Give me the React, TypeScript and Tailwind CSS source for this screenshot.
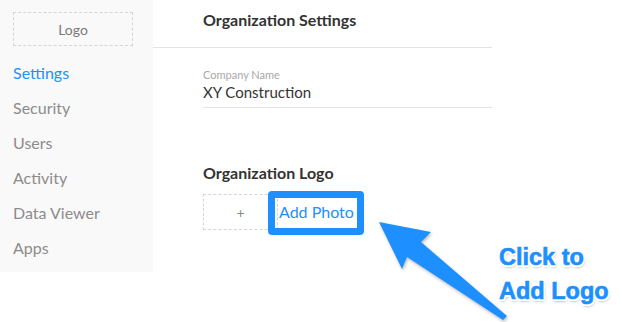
const navItems = ["Settings", "Security", "Users", "Activity", "Data Viewer", "Apps"];

function Sidebar() {
  return (
    <aside className="w-[153px] h-[272px] shrink-0 bg-[#f9f9f9] px-[13px] pt-[12px]">
      <div className="flex h-[34px] w-[120px] items-center justify-center border border-dashed border-[#d5d5d5] text-[14px] text-[#7a7a7a]">
        Logo
      </div>
      <nav className="mt-[9px] flex flex-col">
        {navItems.map((item, index) => (
          <a
            key={item}
            className={`h-[35px] text-[16px] leading-[35px] ${index === 0 ? "text-[#1e8fff]" : "text-[#8c8c8c]"}`}
          >
            {item}
          </a>
        ))}
      </nav>
    </aside>
  );
}

function ArrowNote() {
  return (
    <>
      <svg
        className="absolute left-0 top-0 pointer-events-none [filter:drop-shadow(1px_2px_1.5px_rgba(0,0,0,0.25))]"
        width="622"
        height="322"
        viewBox="0 0 622 322"
      >
        <path d="M379 222 L431 232 L421 242 L507 316 L503 320 L407 257 L402 269 Z" fill="#1e8fff" />
      </svg>
      <div className="absolute left-[499px] top-[240px] text-[23.5px] font-bold leading-[34px] text-[#1e8fff] [-webkit-text-stroke:0.6px_#1e8fff] [font-family:'Liberation_Sans',Arial,sans-serif] [text-shadow:2px_0_0_#fff,-2px_0_0_#fff,0_2px_0_#fff,0_-2px_0_#fff,1.5px_1.5px_0_#fff,-1.5px_-1.5px_0_#fff,1.5px_-1.5px_0_#fff,-1.5px_1.5px_0_#fff,1px_2px_3px_rgba(0,0,0,0.45)]">
        <div>Click to</div>
        <div>Add Logo</div>
      </div>
    </>
  );
}

export default function App() {
  return (
    <div className="relative h-[322px] w-[622px] overflow-hidden bg-white [font-family:Lato,'Open_Sans',sans-serif]">
      <div className="flex">
        <Sidebar />
        <main className="w-[339px]">
          <div className="h-[48px] border-b border-[#e3e3e3] pl-[50px] pt-[10px]">
            <h1 className="text-[16px] font-bold leading-[20px] text-[#333]">Organization Settings</h1>
          </div>
          <div className="pl-[50px]">
            <div className="border-b border-[#e3e3e3] pt-[20px] pb-[5px]">
              <label className="block text-[11px] leading-[14px] text-[#a8a8a8]">Company Name</label>
              <div className="text-[15px] leading-[20px] text-[#333]">XY Construction</div>
            </div>
            <h2 className="mt-[55px] text-[16px] font-bold leading-[20px] text-[#333]">Organization Logo</h2>
            <div className="relative mt-[11px] flex items-center">
              <div className="flex h-[36px] w-[75px] items-center justify-center border border-dashed border-[#d5d5d5] text-[14px] text-[#888]">
                +
              </div>
              <a className="ml-[1px] text-[16px] leading-[20px] text-[#1e8fff]">Add Photo</a>
              <div className="absolute left-[65px] top-[-3px] h-[44px] w-[96px] rounded-[4px] border-[7px] border-[#1e8fff]" />
            </div>
          </div>
        </main>
      </div>
      <ArrowNote />
    </div>
  );
}
